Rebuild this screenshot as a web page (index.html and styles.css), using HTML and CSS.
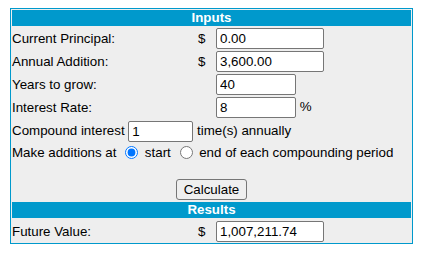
FILE: index.html
```html
<!doctype html>
<html>
<head>
<meta charset="utf-8">
<title>Compound Interest Calculator</title>
<link rel="stylesheet" href="styles.css">
</head>
<body>
<form class="calc" onsubmit="return false;">
	<div class="bar">Inputs</div>
	<div class="row">
		<span class="lbl">Current Principal:</span>
		<span class="cur">$</span>
		<span><input type="text" class="box wide" value="0.00"></span>
	</div>
	<div class="row">
		<span class="lbl">Annual Addition:</span>
		<span class="cur">$</span>
		<span><input type="text" class="box wide" value="3,600.00"></span>
	</div>
	<div class="row">
		<span class="lbl">Years to grow:</span>
		<span class="cur"></span>
		<span><input type="text" class="box mid" value="40"></span>
	</div>
	<div class="row">
		<span class="lbl">Interest Rate:</span>
		<span class="cur"></span>
		<span><input type="text" class="box mid" value="8"> %</span>
	</div>
	<div class="line">Compound interest <input type="text" class="box small" value="1"> time(s) annually</div>
	<div class="line radios">Make additions at <input type="radio" name="when" checked> start <input type="radio" name="when"> end of each compounding period</div>
	<div class="act"><button type="button">Calculate</button></div>
	<div class="bar">Results</div>
	<div class="row last">
		<span class="lbl">Future Value:</span>
		<span class="cur">$</span>
		<span><input type="text" class="box wide" value="1,007,211.74"></span>
	</div>
</form>
</body>
</html>
```

FILE: styles.css
```css
body{
	margin:8px 10px;
	font-family:"Liberation Sans", Arial, sans-serif;
	font-size:13.333px;
	color:#000;
}
.calc{
	margin:0;
	border:1px solid #0099cc;
	background-color:#eeeeee;
	padding:1px;
}
.bar{
	background-color:#0099cc;
	color:#fff;
	font-weight:bold;
	text-align:center;
	height:16px;
	line-height:16px;
}
.row{
	display:grid;
	grid-template-columns:185px 19px 1fr;
	align-items:center;
	height:21px;
	padding-top:2px;
}
.row.last{
	padding-top:3px;
	height:21px;
}
.cur{
	padding-left:1px;
}
.line{
	height:21px;
	padding-top:2px;
	line-height:21px;
}
.radios{
	height:23px;
	padding-top:0;
	line-height:23px;
}
.radios input{
	margin:0 3px 0 5px;
	width:13px;
	height:13px;
	vertical-align:middle;
	position:relative;
	top:-1px;
}
.box{
	box-sizing:border-box;
	height:21px;
	margin:0;
	padding:1px 3px;
	border:1px solid #767676;
	border-radius:2px;
	background:#fff;
	font-family:"Liberation Sans", Arial, sans-serif;
	font-size:13.333px;
	color:#000;
	vertical-align:middle;
}
.wide{width:108px;}
.mid{width:80px;}
.small{width:65px;}
.act{
	text-align:center;
	padding-top:15px;
	padding-bottom:2px;
}
.act button{
	box-sizing:border-box;
	height:21px;
	margin:0;
	padding:1px 7px;
	border:1px solid #767676;
	border-radius:3px;
	background:#efefef;
	font-family:"Liberation Sans", Arial, sans-serif;
	font-size:13.333px;
	color:#000;
	vertical-align:top;
}
```
